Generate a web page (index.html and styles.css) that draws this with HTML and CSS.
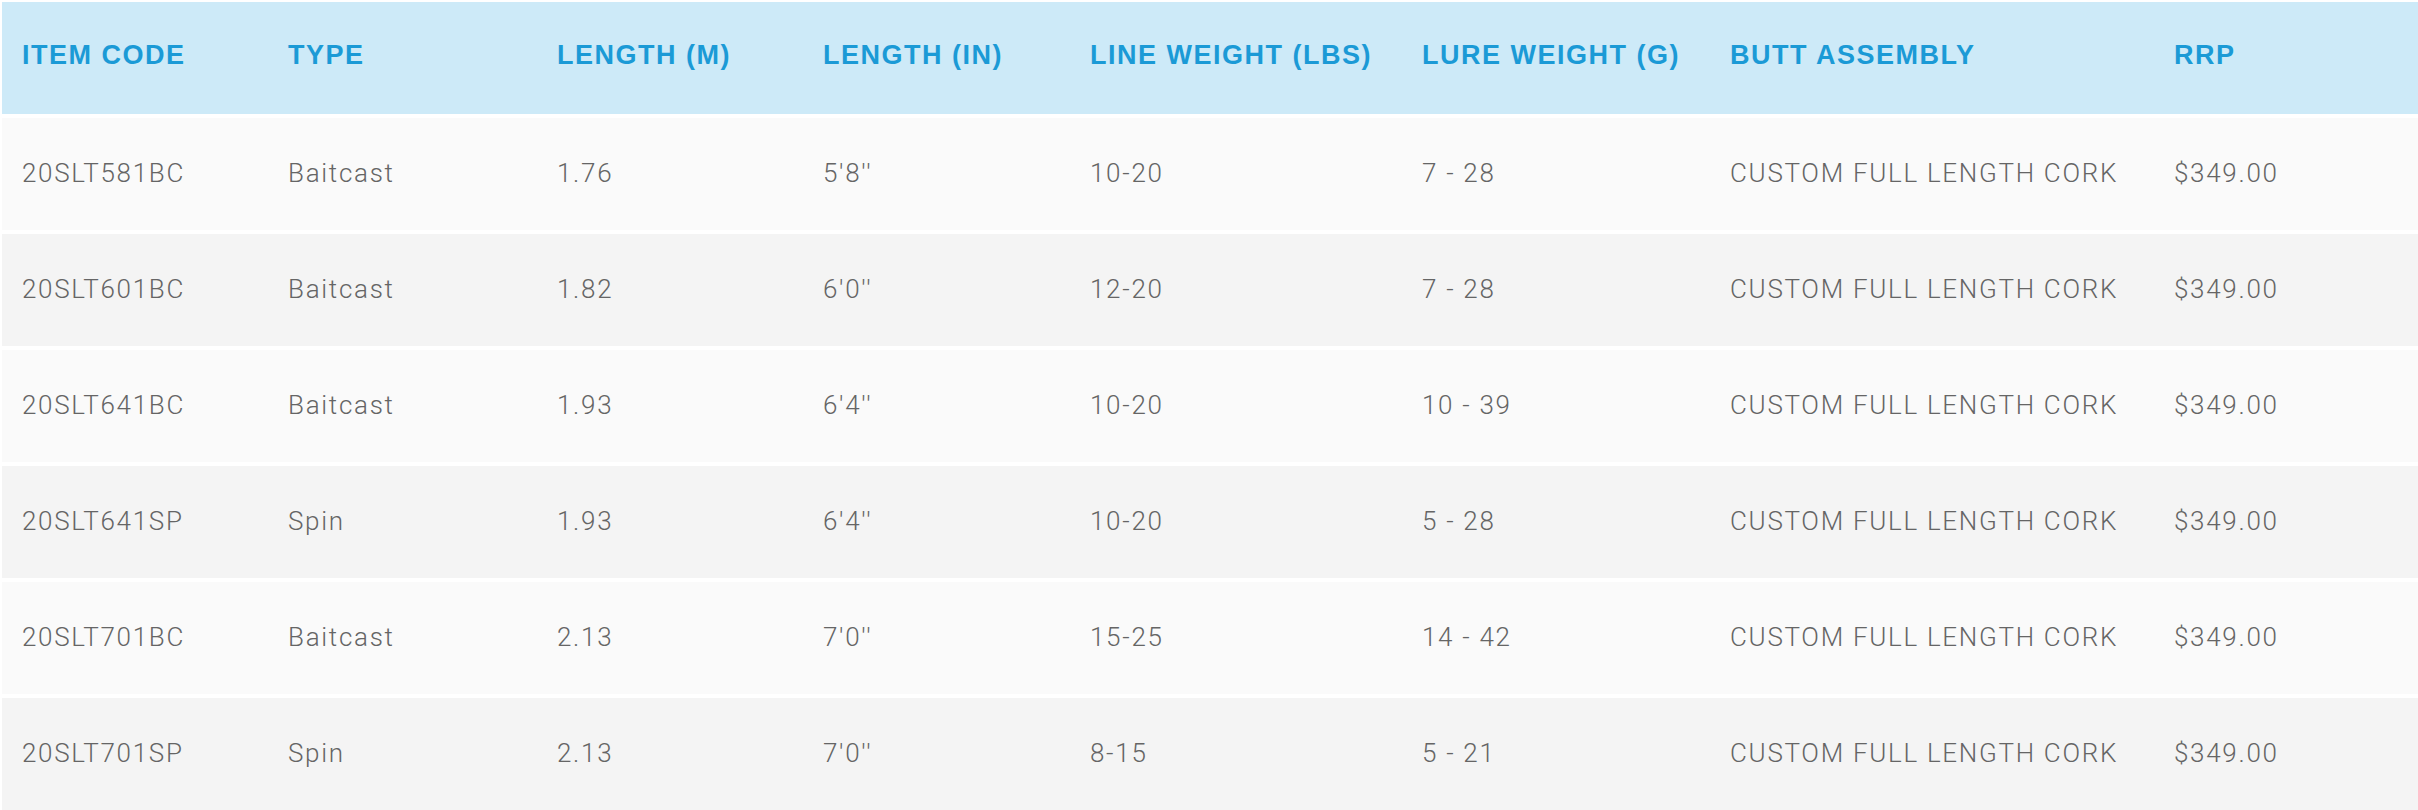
FILE: index.html
```html
<!DOCTYPE html>
<html lang="en">
<head>
<meta charset="utf-8">
<title>Rod specifications</title>
<link rel="stylesheet" href="styles.css">
</head>
<body>
<div class="spec-table">
  <div class="row head">
    <div class="cell">ITEM CODE</div>
    <div class="cell">TYPE</div>
    <div class="cell">LENGTH (M)</div>
    <div class="cell">LENGTH (IN)</div>
    <div class="cell">LINE WEIGHT (LBS)</div>
    <div class="cell">LURE WEIGHT (G)</div>
    <div class="cell">BUTT ASSEMBLY</div>
    <div class="cell">RRP</div>
  </div>
  <div class="row odd">
    <div class="cell">20SLT581BC</div>
    <div class="cell">Baitcast</div>
    <div class="cell">1.76</div>
    <div class="cell">5'8''</div>
    <div class="cell">10-20</div>
    <div class="cell">7 - 28</div>
    <div class="cell">CUSTOM FULL LENGTH CORK</div>
    <div class="cell">$349.00</div>
  </div>
  <div class="row even">
    <div class="cell">20SLT601BC</div>
    <div class="cell">Baitcast</div>
    <div class="cell">1.82</div>
    <div class="cell">6'0''</div>
    <div class="cell">12-20</div>
    <div class="cell">7 - 28</div>
    <div class="cell">CUSTOM FULL LENGTH CORK</div>
    <div class="cell">$349.00</div>
  </div>
  <div class="row odd">
    <div class="cell">20SLT641BC</div>
    <div class="cell">Baitcast</div>
    <div class="cell">1.93</div>
    <div class="cell">6'4''</div>
    <div class="cell">10-20</div>
    <div class="cell">10 - 39</div>
    <div class="cell">CUSTOM FULL LENGTH CORK</div>
    <div class="cell">$349.00</div>
  </div>
  <div class="row even">
    <div class="cell">20SLT641SP</div>
    <div class="cell">Spin</div>
    <div class="cell">1.93</div>
    <div class="cell">6'4''</div>
    <div class="cell">10-20</div>
    <div class="cell">5 - 28</div>
    <div class="cell">CUSTOM FULL LENGTH CORK</div>
    <div class="cell">$349.00</div>
  </div>
  <div class="row odd">
    <div class="cell">20SLT701BC</div>
    <div class="cell">Baitcast</div>
    <div class="cell">2.13</div>
    <div class="cell">7'0''</div>
    <div class="cell">15-25</div>
    <div class="cell">14 - 42</div>
    <div class="cell">CUSTOM FULL LENGTH CORK</div>
    <div class="cell">$349.00</div>
  </div>
  <div class="row even">
    <div class="cell">20SLT701SP</div>
    <div class="cell">Spin</div>
    <div class="cell">2.13</div>
    <div class="cell">7'0''</div>
    <div class="cell">8-15</div>
    <div class="cell">5 - 21</div>
    <div class="cell">CUSTOM FULL LENGTH CORK</div>
    <div class="cell">$349.00</div>
  </div>
</div>
</body>
</html>
```

FILE: styles.css
```css
html, body {
  margin: 0;
  padding: 0;
  background: #ffffff;
}

.spec-table {
  display: flex;
  flex-direction: column;
  gap: 4px;
  padding: 2px 0 0 2px;
  overflow: hidden;
  height: 808px;
}

.row {
  display: grid;
  grid-template-columns: 266px 269px 266px 267px 332px 308px 444px 1fr;
  height: 112px;
  flex: none;
  align-items: center;
}

.cell {
  padding-left: 20px;
  white-space: nowrap;
}

.head {
  background: #cdeaf8;
  color: #1b9ad6;
  font-family: "Liberation Sans", Arial, sans-serif;
  font-weight: 700;
  font-size: 27px;
  letter-spacing: 1.5px;
  align-items: start;
}

.head .cell {
  padding-top: 37px;
  line-height: 32px;
}

.odd {
  background: #fafafa;
}

.even {
  background: #f4f4f4;
}

.odd, .even {
  color: #656565;
  font-family: Roboto, "Liberation Sans", sans-serif;
  font-weight: 300;
  font-size: 26px;
  letter-spacing: 1.7px;
}

.odd .cell, .even .cell {
  line-height: 30px;
  padding-bottom: 3px;
}
```
